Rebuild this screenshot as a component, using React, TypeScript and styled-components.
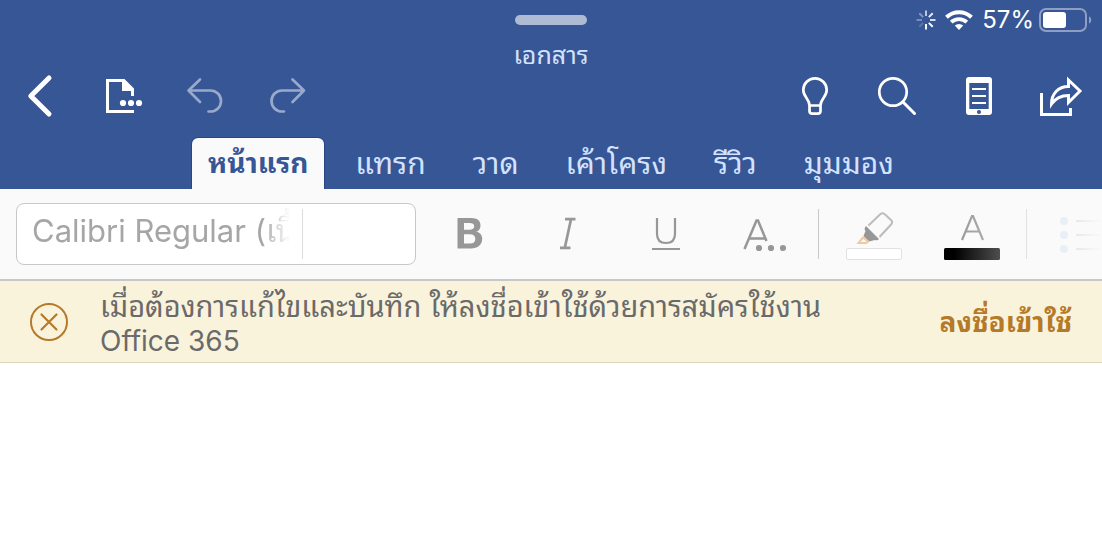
import React from "react";
import styled, { createGlobalStyle } from "styled-components";

const GlobalStyle = createGlobalStyle`
  *, *::before, *::after { box-sizing: border-box; }
  body {
    margin: 0;
    background: #ffffff;
    font-family: Inter, "Noto Sans Thai Looped", Loma, Garuda, Waree, "Noto Sans", "Liberation Sans", sans-serif;
  }
  button, input { font: inherit; color: inherit; margin: 0; }
  svg { display: block; flex: none; }
`;

const Header = styled.header`
  background: #375695;
  color: #ffffff;
`;

const StatusBar = styled.div`
  display: grid;
  grid-template-columns: 1fr auto 1fr;
  align-items: center;
  height: 40px;
  padding: 0 10px;
`;

const Handle = styled.div`
  grid-column: 2;
  width: 72px;
  height: 10px;
  border-radius: 5px;
  background: #afbbd5;
`;

const StatusItems = styled.div`
  display: flex;
  justify-content: flex-end;
  align-items: center;
  gap: 9px;
  font-size: 24px;
  line-height: 28px;
`;

const BatteryGroup = styled.div`
  display: flex;
  align-items: center;
  gap: 5px;
`;

const Title = styled.h1`
  margin: 0;
  height: 32px;
  font-size: 25px;
  line-height: 30px;
  font-weight: 400;
  text-align: center;
  color: #d3e2ff;
`;

const ActionRow = styled.div`
  display: flex;
  justify-content: space-between;
  height: 48px;
`;

const ActionGroup = styled.div`
  display: flex;
`;

const ActionButton = styled.button`
  display: flex;
  align-items: center;
  justify-content: center;
  width: 82px;
  padding: 0;
  border: 0;
  background: none;
  color: #ffffff;
  &:disabled { color: #99a9cb; }
`;

const TabList = styled.nav`
  display: flex;
  justify-content: center;
  gap: 15px;
  padding-top: 18px;
`;

const Tab = styled.button<{ $active?: boolean }>`
  height: 51px;
  padding: 0 16px;
  border: 0;
  border-radius: 6px 6px 0 0;
  background: ${(p) => (p.$active ? "#fafafa" : "transparent")};
  box-shadow: ${(p) => (p.$active ? "0 0 0 1px #2a4781" : "none")};
  clip-path: inset(-1px -1px 0 -1px);
  color: ${(p) => (p.$active ? "#375695" : "#d3e2ff")};
  font-size: ${(p) => (p.$active ? "28px" : "30px")};
  line-height: 46px;
  padding-bottom: 2px;
  font-weight: ${(p) => (p.$active ? 700 : 400)};
  white-space: nowrap;
`;

const Ribbon = styled.div`
  position: relative;
  display: flex;
  align-items: center;
  height: 92px;
  padding-left: 16px;
  border-bottom: 2px solid #c8c8c8;
  background: #fafafa;
  overflow: hidden;
`;

const RibbonFade = styled.div`
  position: absolute;
  top: 0;
  right: 0;
  bottom: -2px;
  width: 148px;
  background: linear-gradient(to right, rgba(250, 250, 250, 0), #fafafa);
  pointer-events: none;
`;

const FontBox = styled.div`
  display: flex;
  align-items: center;
  flex: none;
  width: 400px;
  height: 62px;
  margin-right: 5px;
  border: 1px solid #c8c8c8;
  border-radius: 8px;
  background: #ffffff;
`;

const FontName = styled.input`
  width: 271px;
  height: 60px;
  margin: 0;
  padding: 0 0 12px;
  border: 0;
  outline: 0;
  background: none;
  color: #a6a6a6;
  font-size: 31px;
  mask-image: linear-gradient(to right, #000 230px, transparent 258px);
`;

const FontNameField = styled.div`
  width: 286px;
  height: 50px;
  padding-left: 15px;
  border-right: 1px solid #dcdcdc;
  display: flex;
  align-items: center;
`;

const FontSize = styled.input`
  flex: 1;
  min-width: 0;
  height: 60px;
  border: 0;
  outline: 0;
  background: none;
`;

const ToolButton = styled.button`
  display: flex;
  flex: none;
  align-items: center;
  justify-content: center;
  width: 98px;
  height: 90px;
  padding: 0 0 2px;
  border: 0;
  background: none;
  color: #979797;
`;

const Divider = styled.div`
  flex: none;
  width: 1px;
  height: 50px;
  margin: 0 6px 0 5px;
  background: #c8c8c8;
`;

const Banner = styled.section`
  display: flex;
  align-items: center;
  gap: 32px;
  min-height: 82px;
  padding: 0 30px;
  border-bottom: 1px solid #dcd6bd;
  background: #faf3dc;
`;

const Message = styled.p`
  flex: 1;
  margin: 0;
  padding-top: 4px;
  color: #6a6a6a;
  font-size: 29px;
  line-height: 34px;
`;

const Product = styled.span`
  font-size: 28px;
`;

const PlainButton = styled.button`
  flex: none;
  padding: 0;
  border: 0;
  background: none;
  color: #b57a28;
  font-size: 28px;
  line-height: 34px;
  font-weight: 700;
`;

type IconProps = { children: React.ReactNode; width?: number; height?: number };

const Icon = ({ children, width = 44, height = 44 }: IconProps) => (
  <svg width={width} height={height} viewBox={`0 0 ${width} ${height}`} fill="none" stroke="currentColor" strokeWidth="2.7" aria-hidden="true">
    {children}
  </svg>
);

const spokes = [0.7, 0.9, 0.85, 1, 1, 0.2, 0.35, 0.4];

const Spinner = () => (
  <Icon width={20} height={20}>
    {spokes.map((opacity, i) => (
      <path key={i} d="M10 0.5V6" strokeWidth="1.9" opacity={opacity} transform={`rotate(${i * 45} 10 10)`} />
    ))}
  </Icon>
);

const Wifi = () => (
  <Icon width={28} height={20}>
    <path d="M1.5 7.3a18 18 0 0 1 25 0" strokeWidth="4" />
    <path d="M6.2 12.2a11.3 11.3 0 0 1 15.6 0" strokeWidth="3.8" />
    <path d="M14 20l-4.2-4.4a6 6 0 0 1 8.4 0z" fill="currentColor" stroke="none" />
  </Icon>
);

const Battery = () => (
  <Icon width={53} height={24}>
    <rect x="1" y="1" width="46" height="22" rx="6" stroke="#8f9fc3" strokeWidth="2" />
    <rect x="4" y="4" width="23" height="16" rx="3" fill="currentColor" stroke="none" />
    <path d="M50 8.5c3 1 3 6 0 7z" fill="#8f9fc3" stroke="none" />
  </Icon>
);

const tabs = ["หน้าแรก", "แทรก", "วาด", "เค้าโครง", "รีวิว", "มุมมอง"];

export default function App() {
  return (
    <>
      <GlobalStyle />
      <Header>
        <StatusBar>
          <Handle />
          <StatusItems>
            <Spinner />
            <Wifi />
            <BatteryGroup>
              <span>57%</span>
              <Battery />
            </BatteryGroup>
          </StatusItems>
        </StatusBar>
        <Title>เอกสาร</Title>
        <ActionRow>
          <ActionGroup>
            <ActionButton aria-label="กลับ">
              <Icon>
                <path d="M30 4L11.8 22L30 40" strokeWidth="5" strokeLinecap="round" strokeLinejoin="round" />
              </Icon>
            </ActionButton>
            <ActionButton aria-label="ไฟล์">
              <Icon>
                <path d="M33 37.5H6.5V6.5H23" strokeWidth="3" />
                <path d="M21 5h2.5L33 14.5V22h-3v-5h-9z" fill="currentColor" stroke="none" />
                <g fill="currentColor" stroke="none">
                  <circle cx="22" cy="29" r="3.1" />
                  <circle cx="30" cy="29" r="3.1" />
                  <circle cx="38" cy="29" r="3.1" />
                </g>
              </Icon>
            </ActionButton>
            <ActionButton aria-label="เลิกทำ" disabled>
              <Icon>
                <path d="M17 5.5L5.5 16.5L17 28M5.5 16.5H27.5a10.5 10.5 0 0 1 0 21h-2" strokeLinecap="round" strokeLinejoin="round" />
              </Icon>
            </ActionButton>
            <ActionButton aria-label="ทำซ้ำ" disabled>
              <Icon>
                <path d="M27.5 5.5L39 16.5L27.5 28M39 16.5H17a10.5 10.5 0 0 0 0 21h2" strokeLinecap="round" strokeLinejoin="round" />
              </Icon>
            </ActionButton>
          </ActionGroup>
          <ActionGroup>
            <ActionButton aria-label="บอกฉัน">
              <Icon>
                <path d="M16.5 31.5C16.5 25 10.3 23 10.3 16a11.7 11.7 0 0 1 23.4 0C33.7 23 27.5 25 27.5 31.5M16.5 31.5h11v5.5q0 2.7-2.7 2.7h-5.6q-2.7 0-2.7-2.7z" />
              </Icon>
            </ActionButton>
            <ActionButton aria-label="ค้นหา">
              <Icon>
                <circle cx="18" cy="18" r="13.7" />
                <path d="M28 28L39.5 39.5" strokeWidth="3" strokeLinecap="round" />
              </Icon>
            </ActionButton>
            <ActionButton aria-label="มุมมองอุปกรณ์เคลื่อนที่">
              <Icon>
                <path fillRule="evenodd" d="M12 3h20a3 3 0 0 1 3 3v32a3 3 0 0 1-3 3H12a3 3 0 0 1-3-3V6a3 3 0 0 1 3-3zM12.3 9v26h19.4V9zM22 36a2 2 0 1 0 0 4a2 2 0 0 0 0-4z" fill="currentColor" stroke="none" />
                <path d="M15 15h14M15 22h14M15 29h14" strokeWidth="2" />
              </Icon>
            </ActionButton>
            <ActionButton aria-label="แชร์">
              <Icon>
                <path d="M2.5 19V40.5H31.5V34" strokeWidth="3" />
                <path d="M29.5 6L41 17L29.5 28.5V21.5C22 21.5 16 25 12.5 30C12.5 20 19 12.5 29.5 12.5Z" strokeWidth="3" />
              </Icon>
            </ActionButton>
          </ActionGroup>
        </ActionRow>
        <TabList>
          {tabs.map((label, i) => (
            <Tab key={label} $active={i === 0}>{label}</Tab>
          ))}
        </TabList>
      </Header>
      <Ribbon>
        <FontBox>
          <FontNameField>
            <FontName aria-label="ชื่อฟอนต์" defaultValue="Calibri Regular (เนื้อความ)" />
          </FontNameField>
          <FontSize aria-label="ขนาดฟอนต์" />
        </FontBox>
        <ToolButton aria-label="ตัวหนา">
          <Icon>
            <path fillRule="evenodd" d="M9.500 7H23c6.500 0 9.500 2.700 9.500 7.500 0 3.300-1.600 5.500-4.300 6.300 3.700.7 6 3.200 6 7 0 6-4.300 9.700-11.500 9.700H9.500zM16 12v6.700h5.500c3 0 4.700-1 4.700-3.400S24.500 12 21.500 12zM16 23.300V32.500h6c3.400 0 5.300-1.500 5.300-4.600s-1.900-4.600-5.300-4.600z" fill="currentColor" stroke="none" />
          </Icon>
        </ToolButton>
        <ToolButton aria-label="ตัวเอียง">
          <Icon>
            <path d="M19 8.2h10.5M14 36.800h10.5M25 8.2L18.8 36.800" strokeWidth="2.7" />
          </Icon>
        </ToolButton>
        <ToolButton aria-label="ขีดเส้นใต้">
          <Icon>
            <path d="M13 7v16c0 6.5 3.500 9 9 9s9-2.500 9-9V7M8 38h28" strokeWidth="2.2" />
          </Icon>
        </ToolButton>
        <ToolButton aria-label="การจัดรูปแบบเพิ่มเติม">
          <Icon>
            <path d="M2.5 38L14.5 9.5h1.5L24.5 30M7 27.5h16" strokeWidth="2.5" />
            <g fill="currentColor" stroke="none">
              <circle cx="17" cy="37" r="3.1" />
              <circle cx="29" cy="37" r="3.1" />
              <circle cx="41" cy="37" r="3.1" />
            </g>
          </Icon>
        </ToolButton>
        <Divider />
        <ToolButton aria-label="สีเน้นข้อความ">
          <Icon width={56} height={56}>
            <path d="M22.5 20.5L34.5 9q2-1.5 4 0l6.5 6q2 2 0.5 4L33.5 32" stroke="#bcbcbc" strokeWidth="2" />
            <path d="M20 21L33 34q-1.500 2-4 1l-6 1.500-5.500-5.500 2-5q-2-2 .5-5z" fill="currentColor" stroke="none" />
            <path d="M17 32.5l-4.500 5.500h7.500l2-1.500z" stroke="#f2c8a0" strokeWidth="2" />
            <rect x="0.5" y="43.5" width="55" height="11" rx="1.5" fill="#fff" stroke="#e2e2e2" strokeWidth="1" />
          </Icon>
        </ToolButton>
        <ToolButton aria-label="สีฟอนต์">
          <Icon width={56} height={56}>
            <path d="M18 35L28 11h1L39 35M21.5 26.5h14" strokeWidth="2.2" />
            <rect x="0" y="43" width="56" height="12" rx="1.5" fill="#000" stroke="none" />
          </Icon>
        </ToolButton>
        <Divider />
        <ToolButton aria-label="สัญลักษณ์แสดงหัวข้อย่อย">
          <Icon width={44} height={46}>
            <g fill="#b4cfee" stroke="none">
              <circle cx="4" cy="11" r="4" />
              <circle cx="4" cy="25" r="4" />
              <circle cx="4" cy="39" r="4" />
            </g>
            <path d="M16 11h28M16 25h28M16 39h28" strokeWidth="2" />
          </Icon>
        </ToolButton>
        <RibbonFade />
      </Ribbon>
      <Banner>
        <PlainButton aria-label="ปิด">
          <Icon width={38} height={38}>
            <circle cx="19" cy="19" r="18" strokeWidth="2" />
            <path d="M11.5 11.5l15 15M26.5 11.5l-15 15" strokeWidth="2.2" strokeLinecap="round" />
          </Icon>
        </PlainButton>
        <Message>
          เมื่อต้องการแก้ไขและบันทึก ให้ลงชื่อเข้าใช้ด้วยการสมัครใช้งาน
          <br />
          <Product>Office 365</Product>
        </Message>
        <PlainButton>ลงชื่อเข้าใช้</PlainButton>
      </Banner>
    </>
  );
}
